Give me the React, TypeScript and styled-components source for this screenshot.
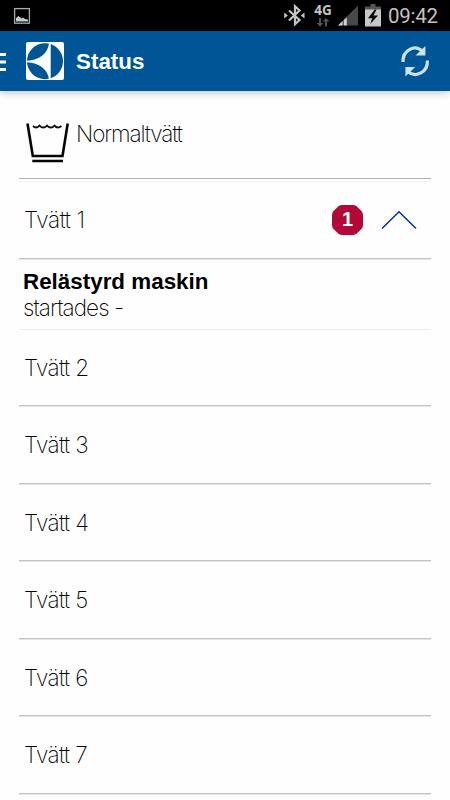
import React from "react";
import styled, { createGlobalStyle } from "styled-components";

const GlobalStyle = createGlobalStyle`
  * { box-sizing: border-box; }
  body { margin: 0; background: #fefefe; overflow: hidden; }
`;

const Screen = styled.div`
  width: 450px;
  height: 800px;
  overflow: hidden;
  display: flex;
  flex-direction: column;
  background: #fefefe;
  color: #000;
  font-family: Inter, "Liberation Sans", sans-serif;
`;

const StatusBar = styled.div`
  flex: none;
  height: 31px;
  display: flex;
  justify-content: space-between;
  background: #000;
`;

const StatusIcons = styled.div`
  display: flex;
`;

const Network = styled.div`
  width: 24px;
  height: 31px;
  padding-top: 4px;
  display: flex;
  flex-direction: column;
  align-items: center;
  color: #c4c4c4;
  font: 700 13.5px/13px "Open Sans", sans-serif;
  svg { display: block; margin-top: 1px; }
`;

const Clock = styled.div`
  width: 62px;
  color: #c2c2c2;
  font: 400 20.5px/32px Roboto, sans-serif;
  letter-spacing: -0.25px;
`;

const AppBar = styled.header`
  flex: none;
  height: 60px;
  display: flex;
  background: #005596;
  box-shadow: 0 1px 8px rgba(0, 0, 0, 0.28);
`;

const Title = styled.h1`
  flex: 1;
  margin: 0;
  padding-left: 12px;
  color: #fff;
  font: 700 22.4px/61px "Liberation Sans", sans-serif;
`;

const List = styled.main`
  padding: 0 19px;
  display: flex;
  flex-direction: column;
`;

const Program = styled.section`
  height: 91px;
  display: flex;
  border-bottom: 1px solid #f0f0ee;
  padding-top: 24px;
`;

const ProgramInner = styled.div`
  flex: 1;
  height: 64px;
  display: flex;
  border-bottom: 1px solid #acb3a7;
`;

const ThinText = styled.span<{ $spacing?: number }>`
  font-weight: 200;
  font-size: 22.5px;
  line-height: 26px;
  letter-spacing: ${(p) => p.$spacing ?? -0.6}px;
  white-space: nowrap;
`;

const ProgramName = styled(ThinText)`
  padding: 6px 0 0 5px;
`;

const Row = styled.div<{ $height: number }>`
  height: ${(p) => p.$height}px;
  display: flex;
  align-items: center;
  padding: 0 14px 0 5px;
  border-bottom: 1px solid #c3c4bc;
  box-shadow: 0 1px 0 #e6e6e1;
`;

const WashRow = styled(Row)`
  padding-top: 1px;
`;

const RowLabel = styled(ThinText)`
  flex: 1;
`;

const Badge = styled.div`
  width: 31px;
  height: 30px;
  margin-right: 18px;
  background: #b30738;
  border-radius: 10px;
  clip-path: polygon(25% 0, 75% 0, 100% 25%, 100% 75%, 75% 100%, 25% 100%, 0 75%, 0 25%);
  color: #fff;
  text-align: center;
  font: 700 20px/28px "Liberation Sans", sans-serif;
`;

const Machine = styled.div`
  height: 71px;
  display: flex;
  flex-direction: column;
  padding: 10px 0 0 4px;
  border-bottom: 1px solid #ececec;
`;

const MachineName = styled.strong`
  font: 700 22.4px/26px "Liberation Sans", sans-serif;
  white-space: nowrap;
`;

const PictureIcon = () => (
  <svg width="40" height="31" viewBox="0 0 40 31">
    <rect x="14.6" y="8.6" width="14.8" height="14.6" fill="none" stroke="#aaa" strokeWidth="1.3" />
    <path d="M16 21.5v-3.500l2.500-2 3 2.500 1.500-1 2 1.500 3 .5v2z" fill="#c8c8c8" />
  </svg>
);

const BluetoothIcon = () => (
  <svg width="27" height="31" viewBox="0 0 27 31">
    <path d="M5 10.500L15.500 20 11 24.300V6.300L15.500 10.500 5 20.500" fill="none" stroke="#c4c4c4" strokeWidth="2.200" />
    <path d="M.2 12.500l3.700 3-3.700 3zM20.500 12.500l-3.700 3 3.700 3z" fill="#c4c4c4" />
  </svg>
);

const DataArrows = () => (
  <svg width="14" height="9" viewBox="0 0 14 9">
    <path d="M3 0h2v5h2.500L4 8.700.5 5H3zM9 8.500h2v-5h2.500L10 0 6.500 3.500H9z" fill="#555" />
  </svg>
);

const SignalIcon = () => (
  <svg width="30" height="31" viewBox="0 0 30 31">
    <path d="M3 25.500L23 5.500v20z" fill="#484848" />
    <path d="M3 25.500l4.500-4.500v4.500zM8.800 25.500V20l3-2.800v8.300z" fill="#d0d0d0" />
  </svg>
);

const BatteryIcon = () => (
  <svg width="23" height="31" viewBox="0 0 23 31">
    <path d="M5.500 4h5v4h-5zM0 6.500h16V10H0z" fill="#555" />
    <path d="M0 9.500h16v17H0z" fill="#c8c8c8" />
    <path d="M9.800 9.500L3 18.200h4.300L5.200 24 13 15.500H8.500L11.500 9.500z" fill="#000" />
  </svg>
);

const MenuIcon = () => (
  <svg width="26" height="60" viewBox="0 0 26 60">
    <path d="M0 23.500h6M0 31h6M0 38.500h6" stroke="#fff" strokeWidth="2.800" />
  </svg>
);

const BrandLogo = () => (
  <svg width="38" height="60" viewBox="0 0 38 60">
    <rect y="11" width="38" height="38" rx="2" fill="#fff" />
    <circle cx="19" cy="30.200" r="18" fill="#005596" />
    <path d="M1 29.800C13 29 22 23 23 12H24.700V48.500H23C22 38 13 32 1 31.200z" fill="#fff" />
  </svg>
);

const RefreshIcon = () => (
  <svg width="50" height="60" viewBox="0 0 50 60">
    <g fill="none" stroke="#cfe0ee" strokeWidth="3.200">
      <path d="M3 31C2.500 19 15 12.500 23 21" />
      <path d="M27.400 29.500C28 41 16 47.500 7.500 40.500" />
    </g>
    <path d="M25.400 15v9.500H15.500zM5.400 45.500V36h9.900z" fill="#cfe0ee" />
  </svg>
);

const WashTubIcon = () => (
  <svg width="52" height="50" viewBox="0 0 52 50">
    <path d="M8.500 8.500L13.800 41H43.500L48.700 8.500M13.300 46H44" fill="none" stroke="#050505" strokeWidth="2.600" />
    <path d="M14 11c2 2 4.500 2 6.500-.3 2.500 2.500 5 2.500 7.500 0 2.500 2.500 5 2.500 7.500 0 2 2.300 4.500 2.300 7 .3" fill="none" stroke="#111" strokeWidth="1.900" />
  </svg>
);

const ChevronUp = () => (
  <svg width="36" height="20" viewBox="0 0 36 20">
    <path d="M1 18.500L18 1.800 35 18.500" fill="none" stroke="#05358c" strokeWidth="1.600" />
  </svg>
);

const washes = [
  { name: "Tvätt 2", height: 76 },
  { name: "Tvätt 3", height: 78 },
  { name: "Tvätt 4", height: 77 },
  { name: "Tvätt 5", height: 78 },
  { name: "Tvätt 6", height: 77 },
  { name: "Tvätt 7", height: 78 },
];

export default function App() {
  return (
    <Screen>
      <GlobalStyle />
      <StatusBar>
        <PictureIcon />
        <StatusIcons>
          <BluetoothIcon />
          <Network>
            4G
            <DataArrows />
          </Network>
          <SignalIcon />
          <BatteryIcon />
          <Clock>09:42</Clock>
        </StatusIcons>
      </StatusBar>
      <AppBar>
        <MenuIcon />
        <BrandLogo />
        <Title>Status</Title>
        <RefreshIcon />
      </AppBar>
      <List>
        <Program>
          <ProgramInner>
            <WashTubIcon />
            <ProgramName $spacing={-1.1}>Normaltvätt</ProgramName>
          </ProgramInner>
        </Program>
        <Row $height={77}>
          <RowLabel $spacing={-0.4}>Tvätt 1</RowLabel>
          <Badge>1</Badge>
          <ChevronUp />
        </Row>
        <Machine>
          <MachineName>Relästyrd maskin</MachineName>
          <ThinText $spacing={-0.9}>startades -</ThinText>
        </Machine>
        {washes.map((wash) => (
          <WashRow key={wash.name} $height={wash.height}>
            <RowLabel>{wash.name}</RowLabel>
          </WashRow>
        ))}
      </List>
    </Screen>
  );
}
